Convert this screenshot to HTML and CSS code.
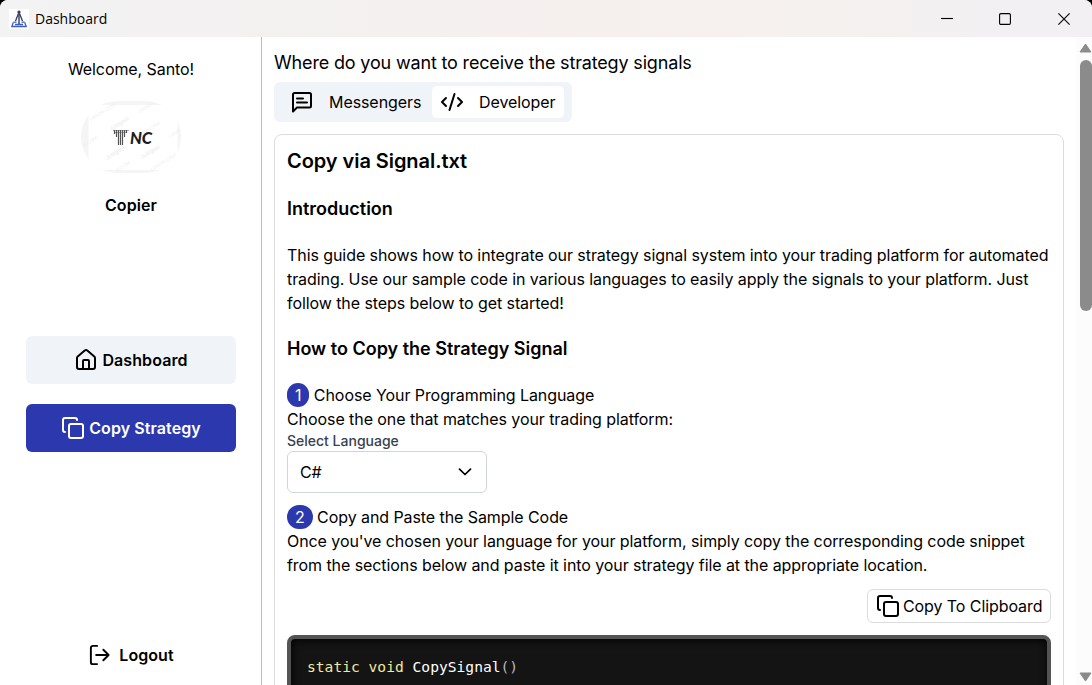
FILE: index.html
```html
<!DOCTYPE html>
<html lang="en">
<head>
<meta charset="utf-8">
<title>Dashboard</title>
<link rel="stylesheet" href="styles.css">
</head>
<body>
<svg class="defs" width="0" height="0">
  <symbol id="copy" viewBox="0 0 24 24"><rect x="8" y="8" width="14" height="14" rx="2"/><path d="M4 16c-1.100 0-2-.9-2-2V4c0-1.100.9-2 2-2h10c1.100 0 2 .9 2 2"/></symbol>
</svg>
<div class="window">
  <header class="titlebar">
    <svg class="app-icon" viewBox="0 0 20 20"><rect width="20" height="20" fill="#fff"/><g fill="none" stroke="#2f3d66" stroke-width="1.300"><path d="M9.500 4.500L6.500 12M10.500 4.500L13.500 12"/><path d="M4.500 13.200h3M12.500 13.200h3M4.300 13.500L2.800 17.500h14.400l-1.500-4M6 15.500h8" stroke="#3d5fc4"/></g><circle cx="10" cy="3" r="1.600" fill="#2f3d66"/><path d="M9.300 4h1.400v11H9.300z" fill="#2f3d66"/></svg>
    <span class="app-title">Dashboard</span>
    <div class="controls">
      <svg class="minimize" viewBox="0 0 12 12"><path d="M0 5.500h12"/></svg>
      <svg viewBox="0 0 12 12"><rect x=".6" y=".6" width="10.800" height="10.800" rx="1.200"/></svg>
      <svg viewBox="0 0 12 12"><path d="M.4.4l11.200 11.200M11.600.4L.4 11.600"/></svg>
    </div>
  </header>
  <div class="body">
    <aside class="sidebar">
      <p class="welcome">Welcome, Santo!</p>
      <svg class="avatar" viewBox="0 0 100 72">
        <defs>
          <clipPath id="oval"><rect width="100" height="72" rx="36"/></clipPath>
        </defs>
        <g clip-path="url(#oval)">
          <rect width="100" height="72" fill="#f5f5f5"/>
          <rect x="7.500" y="4" width="89" height="65" rx="1" fill="#fff"/>
          <g class="watermark">
            <text transform="translate(10 20) rotate(-32)">LOGOAI.COM</text>
            <text transform="translate(59 12) rotate(-32)">LOGOAI</text>
            <text transform="translate(55 38) rotate(-32)">LOGOAI.COM</text>
            <text transform="translate(3 46) rotate(-32)">AI.COM</text>
            <text transform="translate(89 37) rotate(-32)">LOGO</text>
            <text transform="translate(71 70) rotate(-32)">LOGOAI.COM</text>
            <text transform="translate(36 71) rotate(-32)">AI.COM</text>
            <text class="mark" transform="translate(30 30) rotate(-32)">△logoai</text>
            <text class="mark" transform="translate(26 59) rotate(-32)">△logoai</text>
            <text class="mark" transform="translate(61 58) rotate(-32)">△logoai</text>
          </g>
          <path d="M32 29.500h16M34 31.500h12" stroke="#999" stroke-width=".8" fill="none"/>
          <path d="M33.500 29v4M35.500 29v7M37.500 29v15M39.500 29v15M41.500 29v15M43.500 29v7M45.500 29v3" stroke="#555" stroke-width="1.200"/>
          <text class="brand" x="49" y="42.700" textLength="22" lengthAdjust="spacingAndGlyphs">NC</text>
        </g>
      </svg>
      <p class="role">Copier</p>
      <nav class="nav">
        <a class="nav-item"><svg class="icon home" viewBox="0 0 24 24"><path d="M15 21v-8a1 1 0 0 0-1-1h-4a1 1 0 0 0-1 1v8"/><path d="M3 10a2 2 0 0 1 .7-1.500l7-6a2 2 0 0 1 2.600 0l7 6A2 2 0 0 1 21 10v9a2 2 0 0 1-2 2H5a2 2 0 0 1-2-2z"/></svg><span>Dashboard</span></a>
        <a class="nav-item active"><svg class="icon"><use href="#copy"/></svg><span>Copy Strategy</span></a>
      </nav>
      <a class="logout"><svg class="icon" viewBox="0 0 24 24"><path d="M9.500 2.500H5a2 2 0 0 0-2 2v15a2 2 0 0 0 2 2h4.500M8.500 12h13M16 6.500l5.500 5.500-5.500 5.500"/></svg><span>Logout</span></a>
    </aside>
    <main class="content">
      <p class="question">Where do you want to receive the strategy signals</p>
      <div class="tabs">
        <div class="tab messengers"><svg class="icon" viewBox="0 0 24 24"><path d="M3 21.500V4.500a1.500 1.500 0 0 1 1.500-1.500h15a1.500 1.500 0 0 1 1.500 1.500v11.500a1.500 1.500 0 0 1-1.500 1.500H7zM7 8.500h6M7 12.500h10"/></svg><span>Messengers</span></div>
        <div class="tab selected"><svg class="icon" viewBox="0 0 24 24"><path d="M18 16l4-4-4-4M6 8l-4 4 4 4M14.500 4l-5 16"/></svg><span>Developer</span></div>
      </div>
      <section class="card">
        <h1>Copy via Signal.txt</h1>
        <h2>Introduction</h2>
        <p class="intro">This guide shows how to integrate our strategy signal system into your trading platform for automated<br>trading. Use our sample code in various languages to easily apply the signals to your platform. Just<br>follow the steps below to get started!</p>
        <h2>How to Copy the Strategy Signal</h2>
        <div class="step"><span class="badge">1</span> Choose Your Programming Language</div>
        <p>Choose the one that matches your trading platform:</p>
        <div class="label">Select Language</div>
        <div class="select"><span>C#</span><svg viewBox="0 0 14 8"><path d="M1.500 1.200L7 6.500l5.500-5.300"/></svg></div>
        <div class="step"><span class="badge">2</span> Copy and Paste the Sample Code</div>
        <p>Once you've chosen your language for your platform, simply copy the corresponding code snippet<br>from the sections below and paste it into your strategy file at the appropriate location.</p>
        <button class="clipboard"><svg class="icon"><use href="#copy"/></svg>Copy To Clipboard</button>
        <pre class="code"><span class="kw">static</span> <span class="kw">void</span> CopySignal<span class="punct">()</span></pre>
      </section>
    </main>
    <div class="scrollbar">
      <svg viewBox="0 0 13 10"><path d="M6.500 1L12 9H1z"/></svg>
      <div class="thumb"></div>
      <svg class="down" viewBox="0 0 13 10"><path d="M1 1h11L6.500 9z"/></svg>
    </div>
  </div>
</div>
</body>
</html>
```
FILE: styles.css
```css
* { box-sizing: border-box; }
body { margin: 0; background: #000; font: 16px/24px Inter, "Liberation Sans", sans-serif; letter-spacing: -.075px; color: #000; }
p, h1, h2, pre { margin: 0; }
.defs { display: block; position: absolute; }
.window { height: 685px; display: flex; flex-direction: column; overflow: hidden; background: #fff; border-radius: 8px 8px 0 0; }
.titlebar { height: 37px; flex: none; display: flex; align-items: center; padding: 0 22px 0 9px; background: linear-gradient(90deg, #f3f3f3 0%, #f3f1f1 20%, #f5f0ef 45%, #f5f1ee 75%, #f3f0f3 90%); }
.app-icon { width: 20px; height: 20px; }
.app-title { margin-left: 6px; font: 14px/20px "Open Sans", "Noto Sans", sans-serif; letter-spacing: 0; }
.controls { margin-left: auto; display: flex; gap: 47px; }
.controls svg { width: 12px; height: 12px; fill: none; stroke: #000; stroke-width: 1.100; }
.controls .minimize { margin-right: -1px; }
.body { flex: 1; min-height: 0; display: flex; }
.sidebar { width: 262px; flex: none; border-right: 1px solid #bdbdbd; display: flex; flex-direction: column; align-items: center; padding-top: 20px; }
.avatar { width: 100px; height: 72px; margin-top: 20px; }
.welcome { padding-left: 1px; }
.watermark { font: 4.500px Inter, sans-serif; letter-spacing: 0; fill: #f0f0f0; }
.mark { font-size: 5.500px; fill: #e9e9e9; }
.brand { font: italic 900 17px Lato, sans-serif; fill: #1d1d1d; }
.role { margin-top: 20px; padding-left: 1px; font-weight: 600; letter-spacing: .08px; }
.nav { width: 210px; margin-top: 119px; display: flex; flex-direction: column; gap: 20px; }
.nav-item { height: 48px; padding-left: 1px; display: flex; align-items: center; justify-content: center; gap: 4px; border-radius: 6px; background: #f0f4f9; font-weight: 600; letter-spacing: .08px; }
.active { background: #2c39ae; color: #fff; }
.icon { width: 24px; height: 24px; flex: none; fill: none; stroke: currentColor; stroke-width: 2; stroke-linecap: round; stroke-linejoin: round; }
.logout { margin-top: 191px; padding-left: 1px; display: flex; align-items: center; gap: 8px; font-weight: 600; letter-spacing: .08px; }
.logout .icon { width: 23px; }
.content { flex: 1; min-width: 0; padding: 12px 12px 0; overflow: hidden; }
.question { font-size: 18px; line-height: 28px; letter-spacing: -.165px; }
.tabs { width: 298px; height: 40px; margin-top: 5px; padding: 4px 8px 4px 7px; display: flex; justify-content: space-between; border-radius: 6px; background: #f0f4f9; }
.tab { height: 32px; display: flex; align-items: center; border-radius: 5px; }
.messengers { padding-left: 9px; gap: 15px; }
.selected { width: 132px; padding-left: 8px; gap: 15px; background: #fff; }
.card { height: 650px; margin-top: 12px; padding: 12px; border: 1px solid #dcdcdc; border-radius: 8px; }
h1 { font-size: 20px; line-height: 28px; font-weight: 600; letter-spacing: -.06px; }
h2 { font-size: 18px; line-height: 28px; font-weight: 600; letter-spacing: 0; margin: 20px 0; }
.intro { white-space: nowrap; }
.badge { display: inline-block; height: 24px; padding: 0 8px; border-radius: 12px; background: #2c39ae; color: #fff; }
.label { font-size: 14px; line-height: 20px; font-weight: 500; letter-spacing: 0; color: #374151; }
.select { width: 200px; height: 42px; margin-bottom: 12px; padding: 0 14px 0 12px; display: flex; align-items: center; justify-content: space-between; border: 1px solid #d1d5db; border-radius: 6px; }
.select svg { width: 14px; height: 8px; fill: none; stroke: #000; stroke-width: 1.700; stroke-linecap: round; stroke-linejoin: round; }
.clipboard { display: flex; align-items: center; width: 184px; height: 34px; margin: 12px 0 12px auto; padding: 0 8px; gap: 3px; border: 1px solid #dcdcdc; border-radius: 6px; background: #fff; color: #000; font: inherit; letter-spacing: -.08px; white-space: nowrap; }
.code { height: 200px; border: 4px solid #545454; border-radius: 8px; background: #141414; box-shadow: inset 1px 1px 8px #000; padding: 16px; color: #fff; font: 14.610px/24px "DejaVu Sans Mono", monospace; letter-spacing: 0; }
.kw { color: #f1eb9b; }
.punct { color: #b8b8b8; }
.scrollbar { width: 16px; flex: none; display: flex; flex-direction: column; align-items: flex-end; padding: 6px 0 3px; background: #fcfcfc; }
.scrollbar svg { width: 13px; height: 10px; fill: #8b8b8b; stroke: #8b8b8b; stroke-width: 1; stroke-linejoin: round; }
.thumb { width: 12px; height: 251px; margin-top: 7px; border-radius: 6px; background: #8b8b8b; }
.down { margin-top: auto; }
```
